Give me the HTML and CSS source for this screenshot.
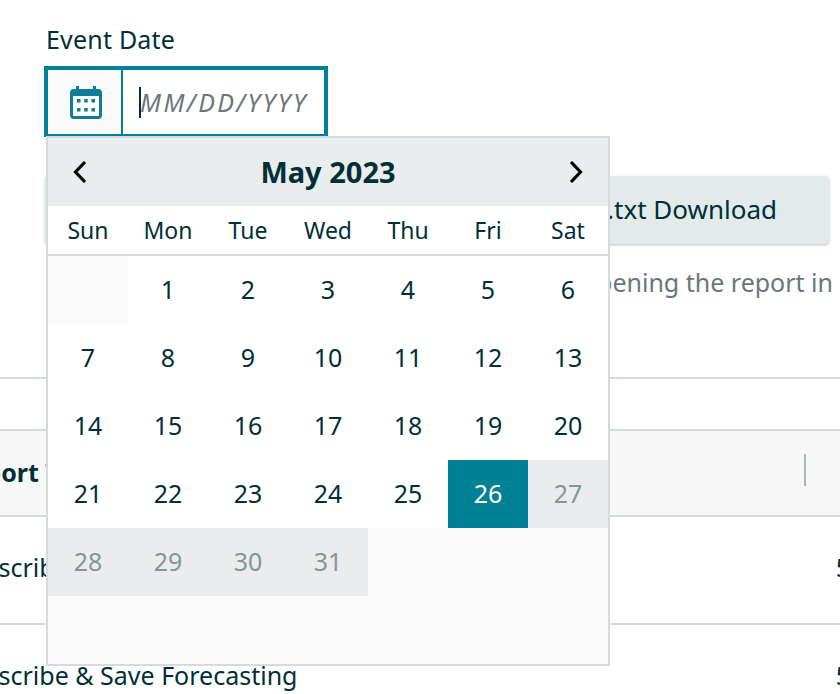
FILE: index.html
```html
<!DOCTYPE html>
<html lang="en">
<head>
<meta charset="utf-8">
<title>Event Date</title>
<link rel="stylesheet" href="styles.css">
</head>
<body>
<div class="page">
  <div class="filter">
    <label class="field-label">Event Date</label>
    <div class="date-input">
      <span class="date-icon">
        <svg width="32" height="34" viewBox="0 0 32 34"><path class="ico" d="M6 1h3v3h14V1h3v3h2a4 4 0 0 1 4 4v22a4 4 0 0 1-4 4H4a4 4 0 0 1-4-4V8a4 4 0 0 1 4-4h2z"/><rect class="ico-w" x="3" y="11" width="26" height="20" rx="1"/><g class="ico"><rect x="7" y="14" width="3.5" height="3.5"/><rect x="14.2" y="14" width="3.5" height="3.5"/><rect x="21.5" y="14" width="3.5" height="3.5"/><rect x="7" y="23" width="3.5" height="3.5"/><rect x="14.2" y="23" width="3.5" height="3.5"/><rect x="21.5" y="23" width="3.5" height="3.5"/></g></svg>
      </span>
      <span class="date-text"><span class="caret"></span><span class="placeholder">MM/DD/YYYY</span></span>
    </div>
    <div class="calendar">
      <div class="cal-head">
        <svg class="chev" width="14" height="24" viewBox="0 0 14 24"><path d="M12 2 2.5 12l9.500 10"/></svg>
        <span class="cal-title">May 2023</span>
        <svg class="chev" width="14" height="24" viewBox="0 0 14 24"><path d="M2 2l9.500 10L2 22"/></svg>
      </div>
      <div class="cal-week">
        <span>Sun</span><span>Mon</span><span>Tue</span><span>Wed</span><span>Thu</span><span>Fri</span><span>Sat</span>
      </div>
      <div class="cal-grid">
        <span class="blank"></span><span>1</span><span>2</span><span>3</span><span>4</span><span>5</span><span>6</span>
        <span>7</span><span>8</span><span>9</span><span>10</span><span>11</span><span>12</span><span>13</span>
        <span>14</span><span>15</span><span>16</span><span>17</span><span>18</span><span>19</span><span>20</span>
        <span>21</span><span>22</span><span>23</span><span>24</span><span>25</span><span class="sel">26</span><span class="off">27</span>
        <span class="off">28</span><span class="off">29</span><span class="off">30</span><span class="off">31</span>
      </div>
    </div>
  </div>
  <div class="actions"><div class="btn">.txt Download</div></div>
  <div class="note"><span>Download may take a few moments before opening the report in</span></div>
  <div class="rule"></div>
  <div class="table">
    <div class="row head"><span class="c-name">Report Type</span><span class="divider"></span></div>
    <div class="row r1"><span class="c-name">Subscribe &amp; Save Forecasting</span><span class="c-num">5</span></div>
    <div class="row r2"><span class="c-name">Subscribe &amp; Save Forecasting</span><span class="c-num">5</span></div>
  </div>
</div>
</body>
</html>
```

FILE: styles.css
```css
* { box-sizing: border-box; }
html, body { margin: 0; padding: 0; background: #fff; }
body { font-family: "Noto Sans", sans-serif; color: #002f36; font-size: 25px; overflow: hidden; }
.page { width: 840px; height: 694px; overflow: hidden; position: relative; }
.filter { position: relative; padding: 25px 0 0 46px; height: 176px; }
.field-label { display: block; line-height: 28px; height: 41px; font-size: 25px; letter-spacing: .2px; }
.date-input { display: flex; width: 284px; height: 71px; margin-left: -2px; border: 4px solid #008296; border-bottom-width: 3px; background: #fff; }
.date-icon { width: 75px; border-right: 2px solid #008296; background: #fafafa; display: flex; align-items: center; justify-content: center; padding-left: 2px; }
.ico { fill: #0f7d95; }
.ico-w { fill: #fff; }
.date-text { display: flex; align-items: center; padding-left: 16px; position: relative; }
.caret { width: 2px; height: 31px; background: #002f36; }
.placeholder { font-style: italic; color: #6c7778; font-size: 25px; letter-spacing: 2.400px; margin-left: -1px; }
.calendar { position: absolute; left: 46px; top: 136px; width: 564px; height: 530px; border: 2px solid #d5dbdb; background: #fafafa; z-index: 2; }
.cal-head { height: 68px; background: #eaeded; display: flex; align-items: center; justify-content: space-between; padding: 0 25px; }
.chev { fill: none; stroke: #000; stroke-width: 3.2; }
.cal-title { font-weight: 700; font-size: 29px; padding-bottom: 2px; }
.cal-week { display: grid; grid-template-columns: repeat(7, 80px); height: 50px; background: #fff; border-bottom: 2px solid #d5dbdb; align-items: center; text-align: center; font-size: 23px; }
.cal-grid { display: grid; grid-template-columns: repeat(7, 80px); grid-auto-rows: 68px; }
.cal-grid span { display: flex; align-items: center; justify-content: center; background: #fff; font-size: 25px; padding-bottom: 2px; }
.cal-grid .blank { background: #fafafa; }
.cal-grid .sel { background: #008296; color: #fff; }
.cal-grid .off { background: #ebeced; color: #879596; }
.actions { display: flex; justify-content: flex-end; padding-right: 11px; }
.btn { width: 784px; height: 68px; background: #e3eaea; border-radius: 4px; box-shadow: 0 1px 3px rgba(0,47,54,.3); display: flex; align-items: center; justify-content: flex-end; padding: 0 52px 3px 0; font-size: 26px; }
.note { display: flex; justify-content: flex-end; padding-right: 7px; height: 112px; margin-top: 22px; line-height: 32px; color: #687879; font-size: 25px; white-space: nowrap; }
.rule { height: 2px; margin-top: -1px; background: #d5dbdb; }
.table { margin-top: 50px; }
.row { position: relative; display: flex; align-items: center; justify-content: space-between; white-space: nowrap; border-bottom: 2px solid #d5dbdb; font-size: 25px; padding-bottom: 3px; }
.head { height: 88px; background: #f7f7f7; border-top: 2px solid #d5dbdb; font-weight: 700; }
.r1 { height: 108px; padding-bottom: 7px; }
.r2 { height: 108px; border-bottom: 0; padding-bottom: 9px; }
.c-name { margin-left: -46px; }
.c-num { margin-right: -10px; }
.divider { position: absolute; left: 804px; top: 23px; width: 2px; height: 32px; background: #aab7b8; }
```
